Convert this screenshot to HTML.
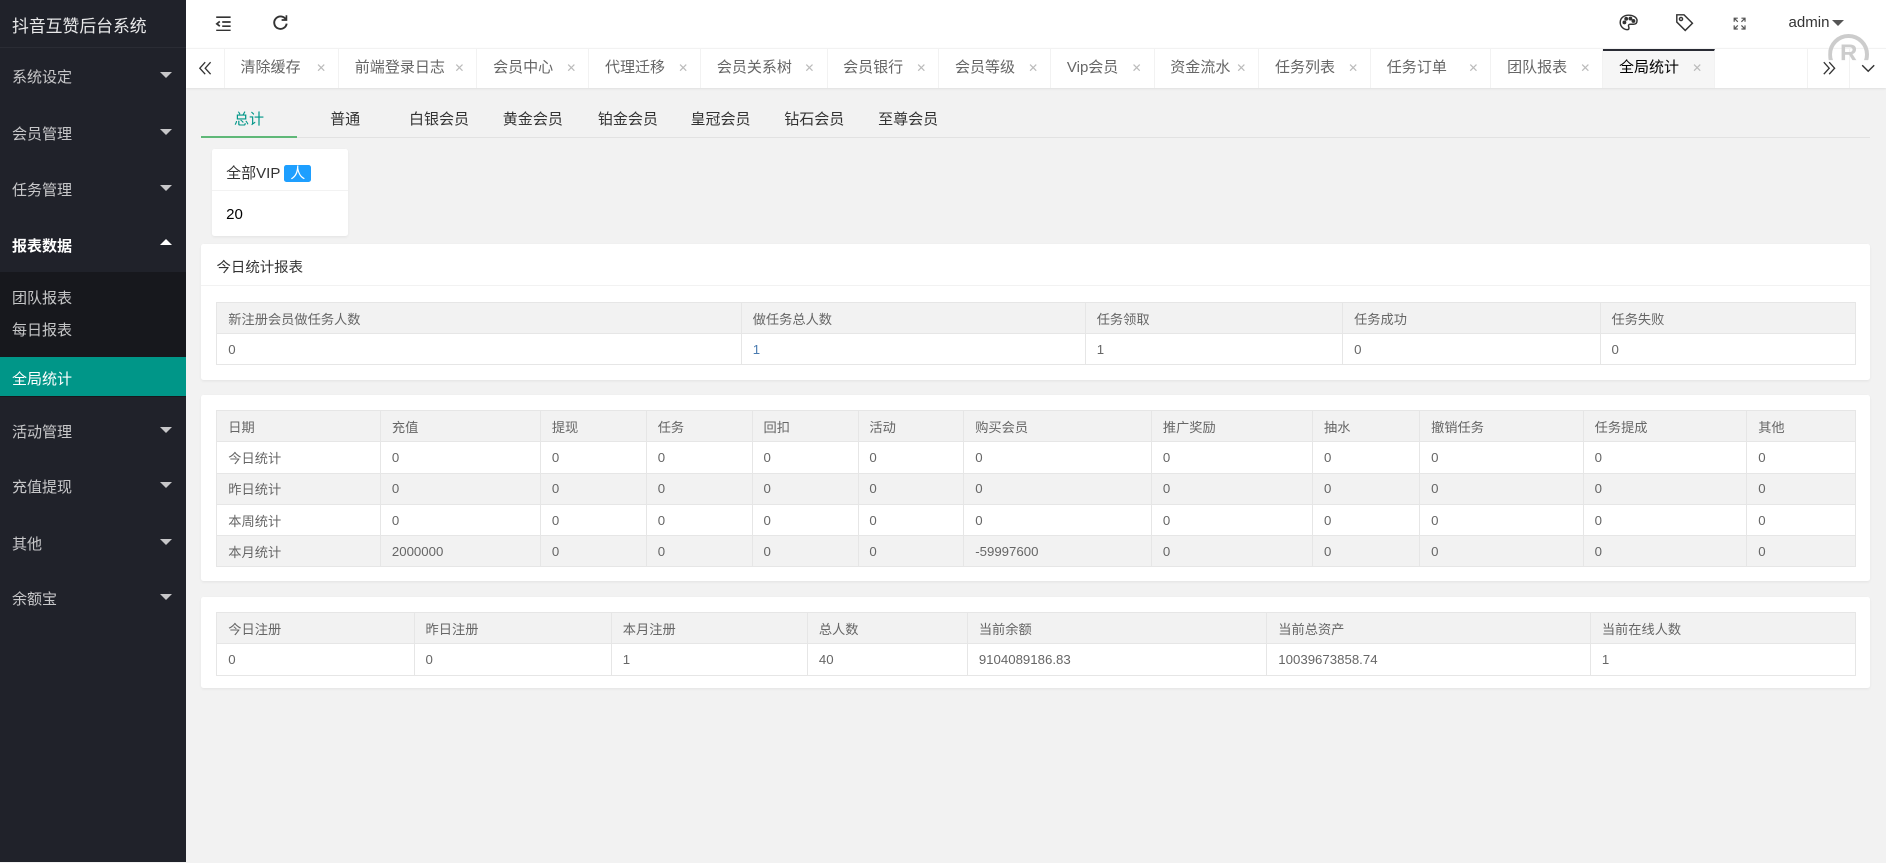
<!DOCTYPE html>
<html><head><meta charset="utf-8">
<style>
*{margin:0;padding:0;box-sizing:border-box}
html,body{width:1886px;height:863px;overflow:hidden;background:#f2f2f2}
#w{zoom:1.2028;width:1568px;height:717px;position:relative;font-family:"Liberation Sans","Noto Sans CJK SC",sans-serif;font-size:12px;color:#333;background:#f2f2f2}
.abs{position:absolute}
#side{left:0;top:0;width:155px;height:717px;background:#20222a;color:#fff}
#side .logo{position:absolute;left:10px;top:10px;font-size:14px;color:rgba(255,255,255,.9)}
#side .hl{position:absolute;left:0;top:39px;width:155px;height:1px;background:#2a2c34}
.mi{position:absolute;left:10px;font-size:12.5px;color:rgba(255,255,255,.75)}
.mi.b{color:#fff;font-weight:bold}
.tri{position:absolute;left:133px;width:0;height:0;border-left:5px solid transparent;border-right:5px solid transparent;border-top:5px solid rgba(255,255,255,.75)}
.tri.up{border-top:none;border-bottom:5px solid #fff}
#sub{position:absolute;left:0;top:226px;width:155px;height:104px;background:#17181d}
#head{left:155px;top:0;width:1413px;height:40px;background:#fff}
#tabs{left:155px;top:40px;width:1413px;height:33px;background:#fff;border-top:1px solid #f2f2f2;box-shadow:0 1px 2px rgba(0,0,0,.1)}
.tb{position:absolute;top:0;height:32px;border-right:1px solid #f2f2f2;line-height:32px;padding-left:13px;color:#666;font-size:12.5px}
.tb .x{position:absolute;right:10px;top:0;color:#bbb;font-size:10px}
.tb.act{background:#f6f6f6;color:#000;border-top:2px solid #292b34;line-height:29px}
.st{position:absolute;top:90px;width:78px;text-align:center;font-size:12.5px;color:#333}
.card{position:absolute;background:#fff;border-radius:2px;box-shadow:0 1px 2px rgba(0,0,0,.05)}
table{position:absolute;border-collapse:collapse;font-size:11px;color:#666;table-layout:fixed}
td{border:1px solid #e6e6e6;height:26px;padding:0 9px;white-space:nowrap;overflow:hidden}
tr.h td,tr.s td{background:#f2f2f2}
</style></head><body><div id="w">
<div id="side" class="abs">
 <div class="logo">抖音互赞后台系统</div><div class="hl"></div>
 <div class="mi" style="top:55px">系统设定</div><div class="tri" style="top:60px"></div>
 <div class="mi" style="top:102px">会员管理</div><div class="tri" style="top:107px"></div>
 <div class="mi" style="top:149px">任务管理</div><div class="tri" style="top:154px"></div>
 <div class="mi b" style="top:195px">报表数据</div><div class="tri up" style="top:199px"></div>
 <div id="sub"></div>
 <div class="mi" style="top:239px">团队报表</div>
 <div class="mi" style="top:265px">每日报表</div>
 <div style="position:absolute;left:0;top:297px;width:155px;height:32px;background:#009688"></div>
 <div class="mi" style="top:306px;color:#fff">全局统计</div>
 <div class="mi" style="top:350px">活动管理</div><div class="tri" style="top:355px"></div>
 <div class="mi" style="top:396px">充值提现</div><div class="tri" style="top:401px"></div>
 <div class="mi" style="top:443px">其他</div><div class="tri" style="top:448px"></div>
 <div class="mi" style="top:489px">余额宝</div><div class="tri" style="top:494px"></div>
</div>
<div id="head" class="abs">
 <svg class="abs" style="left:24px;top:13px" width="14" height="13" viewBox="0 0 14 13" fill="none" stroke="#333" stroke-width="1.4"><path d="M1 1h12M6 5h7M6 8.5h7M1 12h12M4 4.5L1.5 6.5 4 8.5"/></svg>
 <svg class="abs" style="left:71px;top:12px" width="14" height="14" viewBox="0 0 14 14" fill="none" stroke="#333" stroke-width="1.6"><path d="M11.5 4.5A5.2 5.2 0 1 0 12.2 8"/><path d="M12 1v4H8" stroke-width="1.4"/></svg>
 <svg class="abs" style="left:1191px;top:12px" width="16" height="14" viewBox="0 0 16 14" fill="none" stroke="#333" stroke-width="1.2"><path d="M8 1C4 1 1 3.5 1 7s3 6 6 6c1.5 0 1.5-1.5 1-2.5s0-2 1.5-2H12c2 0 3-1.2 3-3C15 3 12 1 8 1z"/><circle cx="4.5" cy="7" r="1" fill="#333"/><circle cx="6" cy="4" r="1" fill="#333"/><circle cx="9.5" cy="3.8" r="1" fill="#333"/><circle cx="12" cy="5.8" r="1" fill="#333"/></svg>
 <svg class="abs" style="left:1238px;top:11px" width="16" height="16" viewBox="0 0 16 16" fill="none" stroke="#333" stroke-width="1.2"><path d="M1.5 1.5h6l7 7-6 6-7-7z"/><circle cx="5" cy="5" r="1.3"/></svg>
 <svg class="abs" style="left:1286px;top:14px" width="11" height="11" viewBox="0 0 11 11" fill="none" stroke="#555" stroke-width="1"><path d="M1 4V1h3M7 1h3v3M10 7v3H7M4 10H1V7M1 1l3 3M10 1L7 4M10 10L7 7M1 10l3-3"/></svg>
 <div class="abs" style="left:1332px;top:12px;font-size:12.5px;color:#333">admin</div>
 <div class="abs" style="left:1368px;top:17px;border-left:5px solid transparent;border-right:5px solid transparent;border-top:5px solid #555"></div>
</div>
<div id="tabs" class="abs">
 <div class="tb" style="left:0;width:32px;padding:0"><svg style="position:absolute;left:10px;top:10px" width="12" height="12" viewBox="0 0 12 12" fill="none" stroke="#333" stroke-width="1.1"><path d="M6 1L1.5 6 6 11M10.5 1L6 6l4.5 5"/></svg></div>
 <div class="tb" style="left:32px;width:95px">清除缓存<span class="x">✕</span></div>
 <div class="tb" style="left:127px;width:115px">前端登录日志<span class="x">✕</span></div>
 <div class="tb" style="left:242px;width:93px">会员中心<span class="x">✕</span></div>
 <div class="tb" style="left:335px;width:93px">代理迁移<span class="x">✕</span></div>
 <div class="tb" style="left:428px;width:105px">会员关系树<span class="x">✕</span></div>
 <div class="tb" style="left:533px;width:93px">会员银行<span class="x">✕</span></div>
 <div class="tb" style="left:626px;width:93px">会员等级<span class="x">✕</span></div>
 <div class="tb" style="left:719px;width:86px">Vip会员<span class="x">✕</span></div>
 <div class="tb" style="left:805px;width:87px">资金流水<span class="x">✕</span></div>
 <div class="tb" style="left:892px;width:93px">任务列表<span class="x">✕</span></div>
 <div class="tb" style="left:985px;width:100px">任务订单<span class="x">✕</span></div>
 <div class="tb" style="left:1085px;width:93px">团队报表<span class="x">✕</span></div>
 <div class="tb act" style="left:1178px;width:93px">全局统计<span class="x">✕</span></div>
 <div class="tb" style="left:1347px;width:36px;border-left:1px solid #f2f2f2;padding:0"><svg style="position:absolute;left:12px;top:10px" width="12" height="12" viewBox="0 0 12 12" fill="none" stroke="#333" stroke-width="1.1"><path d="M1.5 1L6 6l-4.5 5M6 1l4.5 5L6 11"/></svg></div>
 <div class="tb" style="left:1383px;width:30px;padding:0;border:none"><svg style="position:absolute;left:9px;top:12px" width="12" height="8" viewBox="0 0 12 8" fill="none" stroke="#333" stroke-width="1.2"><path d="M1 1l5 5 5-5"/></svg></div>
</div>
<div class="abs" style="left:1520px;top:28px;width:34px;height:34px;border:4px solid #ccc;border-radius:50%;clip-path:inset(0 0 12px 0);color:#ccc;font-weight:bold;font-size:20px;text-align:center;line-height:26px">R</div>
<div class="st" style="left:168px;color:#009688">总计</div>
<div class="st" style="left:248px">普通</div>
<div class="st" style="left:326px">白银会员</div>
<div class="st" style="left:404px">黄金会员</div>
<div class="st" style="left:483px">铂金会员</div>
<div class="st" style="left:560px">皇冠会员</div>
<div class="st" style="left:638px">钻石会员</div>
<div class="st" style="left:716px">至尊会员</div>
<div class="abs" style="left:167px;top:114px;width:1388px;height:1px;background:#e2e2e2"></div>
<div class="abs" style="left:167px;top:113px;width:80px;height:2px;background:#5FB878"></div>
<div class="card" style="left:176px;top:124px;width:113px;height:72px">
 <div class="abs" style="left:12px;top:11px;font-size:12.5px">全部VIP <span style="background:#1E9FFF;color:#fff;padding:0 5px;border-radius:2px">人</span></div>
 <div class="abs" style="left:0;top:34px;width:113px;height:1px;background:#f2f2f2"></div>
 <div class="abs" style="left:12px;top:47px;font-size:12.5px;color:#000">20</div>
</div>
<div class="card" style="left:167px;top:203px;width:1388px;height:113px">
 <div class="abs" style="left:13px;top:10px;font-size:12px">今日统计报表</div>
 <div class="abs" style="left:0;top:34px;width:1388px;height:1px;background:#f2f2f2"></div>
 <table style="left:13px;top:48px;width:1362px">
  <colgroup><col style="width:436px"><col style="width:286px"><col style="width:214px"><col style="width:214px"><col style="width:212px"></colgroup>
  <tr class="h"><td>新注册会员做任务人数</td><td>做任务总人数</td><td>任务领取</td><td>任务成功</td><td>任务失败</td></tr>
  <tr><td>0</td><td style="color:#4a7bb0">1</td><td>1</td><td>0</td><td>0</td></tr>
 </table>
</div>
<div class="card" style="left:167px;top:328px;width:1388px;height:155px">
 <table style="left:13px;top:13px;width:1362px">
  <colgroup><col style="width:136px"><col style="width:133px"><col style="width:88px"><col style="width:88px"><col style="width:88px"><col style="width:88px"><col style="width:156px"><col style="width:134px"><col style="width:89px"><col style="width:136px"><col style="width:136px"><col style="width:90px"></colgroup>
  <tr class="h"><td>日期</td><td>充值</td><td>提现</td><td>任务</td><td>回扣</td><td>活动</td><td>购买会员</td><td>推广奖励</td><td>抽水</td><td>撤销任务</td><td>任务提成</td><td>其他</td></tr>
  <tr><td>今日统计</td><td>0</td><td>0</td><td>0</td><td>0</td><td>0</td><td>0</td><td>0</td><td>0</td><td>0</td><td>0</td><td>0</td></tr>
  <tr class="s"><td>昨日统计</td><td>0</td><td>0</td><td>0</td><td>0</td><td>0</td><td>0</td><td>0</td><td>0</td><td>0</td><td>0</td><td>0</td></tr>
  <tr><td>本周统计</td><td>0</td><td>0</td><td>0</td><td>0</td><td>0</td><td>0</td><td>0</td><td>0</td><td>0</td><td>0</td><td>0</td></tr>
  <tr class="s"><td>本月统计</td><td>2000000</td><td>0</td><td>0</td><td>0</td><td>0</td><td>-59997600</td><td>0</td><td>0</td><td>0</td><td>0</td><td>0</td></tr>
 </table>
</div>
<div class="card" style="left:167px;top:496px;width:1388px;height:76px">
 <table style="left:13px;top:13px;width:1362px">
  <colgroup><col style="width:164px"><col style="width:164px"><col style="width:163px"><col style="width:133px"><col style="width:249px"><col style="width:269px"><col style="width:220px"></colgroup>
  <tr class="h"><td>今日注册</td><td>昨日注册</td><td>本月注册</td><td>总人数</td><td>当前余额</td><td>当前总资产</td><td>当前在线人数</td></tr>
  <tr><td>0</td><td>0</td><td>1</td><td>40</td><td>9104089186.83</td><td>10039673858.74</td><td>1</td></tr>
 </table>
</div>
</div></body></html>
